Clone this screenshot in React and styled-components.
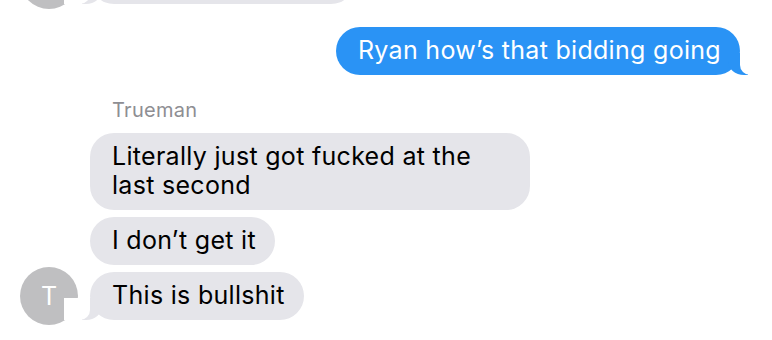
import React from "react";
import styled, { createGlobalStyle, css } from "styled-components";

const GlobalStyle = createGlobalStyle`
  html, body {
    margin: 0;
    padding: 0;
    background: #ffffff;
  }
  body {
    font-family: Inter, "Liberation Sans", Arial, sans-serif;
    -webkit-font-smoothing: antialiased;
  }
`;

const Screen = styled.div`
  width: 772px;
  height: 340px;
  overflow: hidden;
  background: #ffffff;
`;

const Thread = styled.div`
  display: flex;
  flex-direction: column;
  padding: 0 32px 0 20px;
`;

const IncomingGroup = styled.div`
  display: flex;
  align-items: flex-end;
  gap: 12px;
  margin-top: ${({ $top }) => $top}px;
`;

const Avatar = styled.div`
  flex: 0 0 58px;
  width: 58px;
  height: 58px;
  border-radius: 50%;
  background: #bfbfc1;
  color: #ffffff;
  font-size: 25px;
  display: flex;
  align-items: center;
  justify-content: center;
`;

const Stack = styled.div`
  display: flex;
  flex-direction: column;
  align-items: flex-start;
  gap: 7px;
  margin-bottom: 5px;
`;

const SenderName = styled.div`
  font-size: 20px;
  line-height: 24px;
  letter-spacing: 0.3px;
  color: #8e8e93;
  margin: 0 0 4px 22px;
`;

const OutgoingRow = styled.div`
  display: flex;
  justify-content: flex-end;
  margin-top: 18px;
  margin-bottom: 23px;
`;

const tailRight = css`
  &::before {
    content: "";
    position: absolute;
    bottom: 0;
    right: -8px;
    width: 20px;
    height: 22px;
    background: ${({ $bg }) => $bg};
    border-bottom-left-radius: 16px 14px;
  }
  &::after {
    content: "";
    position: absolute;
    bottom: 0;
    right: -26px;
    width: 26px;
    height: 22px;
    background: #ffffff;
    border-bottom-left-radius: 10px;
  }
`;

const tailLeft = css`
  &::before {
    content: "";
    position: absolute;
    bottom: 0;
    left: -8px;
    width: 20px;
    height: 22px;
    background: ${({ $bg }) => $bg};
    border-bottom-right-radius: 16px 14px;
  }
  &::after {
    content: "";
    position: absolute;
    bottom: 0;
    left: -26px;
    width: 26px;
    height: 22px;
    background: #ffffff;
    border-bottom-right-radius: 10px;
  }
`;

const Bubble = styled.div`
  position: relative;
  box-sizing: border-box;
  max-width: 440px;
  padding: 9px 19px 10px 22px;
  border-radius: 24px;
  font-size: 25px;
  line-height: 29px;
  letter-spacing: 0.3px;
  background: ${({ $bg }) => $bg};
  color: ${({ $color }) => $color};
  ${({ $width }) => $width && `width: ${$width}px; height: 48px;`}
  ${({ $tail }) => ($tail === "right" ? tailRight : $tail === "left" ? tailLeft : "")}
  z-index: 0;
`;

const Text = styled.span`
  position: relative;
  z-index: 1;
`;

const GREY = "#e5e5ea";
const BLUE = "#2a93f5";

const incoming = [
  { id: 1, text: "Literally just got fucked at the last second" },
  { id: 2, text: "I don\u2019t get it" },
  { id: 3, text: "This is bullshit" },
];

const App = () => {
  return (
    <Screen>
      <GlobalStyle />
      <Thread>
        <IncomingGroup $top={-49}>
          <Avatar />
          <Stack>
            <Bubble $bg={GREY} $color="#000" $tail="left" $width={265} />
          </Stack>
        </IncomingGroup>

        <OutgoingRow>
          <Bubble $bg={BLUE} $color="#fff" $tail="right">
            <Text>Ryan how’s that bidding going</Text>
          </Bubble>
        </OutgoingRow>

        <IncomingGroup $top={0}>
          <Avatar>T</Avatar>
          <Stack>
            <SenderName>Trueman</SenderName>
            {incoming.map((msg, i) => (
              <Bubble
                key={msg.id}
                $bg={GREY}
                $color="#000"
                $tail={i === incoming.length - 1 ? "left" : null}
              >
                <Text>{msg.text}</Text>
              </Bubble>
            ))}
          </Stack>
        </IncomingGroup>
      </Thread>
    </Screen>
  );
};

export default App;
